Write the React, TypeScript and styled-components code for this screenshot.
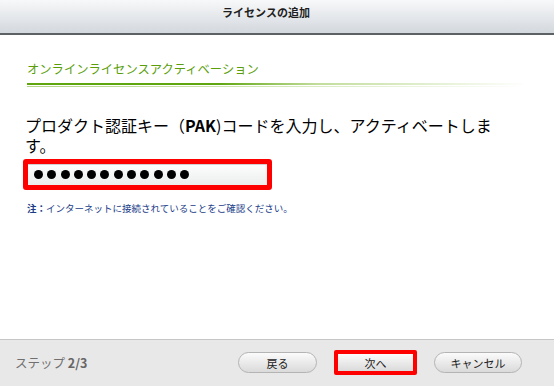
import styled, { createGlobalStyle } from 'styled-components';

const GlobalStyle = createGlobalStyle`
  html, body {
    margin: 0;
    padding: 0;
    width: 554px;
    height: 386px;
    overflow: hidden;
    background: #fff;
    font-family: "Noto Sans CJK JP", "DejaVu Sans", sans-serif;
  }
`;

const DOT_COUNT = 12;

export default function App() {
  return (
    <>
      <GlobalStyle />
      <S_Page>
        <S_Header>ライセンスの追加</S_Header>
        <S_Body>
          <S_SectionTitle>オンラインライセンスアクティベーション</S_SectionTitle>
          <S_Rule />
          <S_Lead>
            プロダクト認証キー（<b>PAK</b>)コードを入力し、アクティベートします。
          </S_Lead>
          <S_KeyField>
            {Array.from({ length: DOT_COUNT }).map((_, i) => (
              <S_Dot key={i} />
            ))}
          </S_KeyField>
          <S_Note>
            <b>注：</b>インターネットに接続されていることをご確認ください。
          </S_Note>
        </S_Body>
        <S_Footer>
          <S_Step>
            ステップ <b>2/3</b>
          </S_Step>
          <S_Actions>
            <S_Button $w={79}>戻る</S_Button>
            <S_Highlight>
              <S_Button $w={75} $square>
                次へ
              </S_Button>
            </S_Highlight>
            <S_Button $w={88}>キャンセル</S_Button>
          </S_Actions>
        </S_Footer>
      </S_Page>
    </>
  );
}

// ------------ スタイル設定 ------------
const S_Page = styled.div`
  display: flex;
  flex-direction: column;
  width: 554px;
  height: 386px;
`;

const S_Header = styled.div`
  height: 35px;
  box-sizing: border-box;
  padding: 4px 22px 0 0;
  text-align: center;
  font-size: 11px;
  line-height: 16px;
  font-weight: bold;
  color: #1e1e1e;
  background: linear-gradient(#f7f8f9, #d3d8de);
  border-bottom: 2px solid #5c6166;
`;

const S_Body = styled.div`
  flex: 1;
  display: flex;
  flex-direction: column;
  align-items: flex-start;
  padding: 26px 0 0 23px;
  background: #fff;
`;

const S_SectionTitle = styled.div`
  margin-left: 4px;
  font-size: 12.3px;
  line-height: 16px;
  color: #5a9e0a;
`;

const S_Rule = styled.div`
  margin: 6px 0 0 4px;
  width: 500px;
  height: 4px;
  background:
    linear-gradient(to right, #5fa60f 0%, #5fa60f 38%, #c2dd9c 58%, #ffffff 100%) top / 100% 2px no-repeat,
    linear-gradient(to right, #b3d586 0%, #d3e7b8 50%, #ffffff 100%) bottom / 100% 1px no-repeat;
`;

const S_Lead = styled.div`
  margin: 28px 0 0 2px;
  width: 475px;
  font-size: 16px;
  line-height: 20px;
  color: #000;
  b {
    font-weight: bold;
  }
`;

const S_KeyField = styled.div`
  display: flex;
  align-items: center;
  gap: 4.3px;
  margin-top: 4px;
  width: 249px;
  height: 31px;
  box-sizing: border-box;
  padding-left: 6px;
  border: 5px solid #ff0000;
  border-radius: 3px;
  background: linear-gradient(#fdfdfd, #eceeee);
  box-shadow: inset 0 1px 0 #d0d0d0;
`;

const S_Dot = styled.span`
  width: 9px;
  height: 9px;
  border-radius: 50%;
  background: #000;
  flex: none;
`;

const S_Note = styled.div`
  margin: 11px 0 0 4px;
  font-size: 9.5px;
  line-height: 14px;
  color: #1b3d88;
  b {
    font-weight: bold;
  }
`;

const S_Footer = styled.div`
  display: flex;
  align-items: center;
  justify-content: space-between;
  height: 47px;
  box-sizing: border-box;
  padding: 0 32px 1px 15px;
  background: #e8e8e8;
  border-top: 1px solid #c6c6c6;
`;

const S_Step = styled.div`
  font-size: 12.5px;
  color: #707070;
  b {
    font-weight: bold;
    color: #666;
  }
`;

const S_Actions = styled.div`
  display: flex;
  align-items: center;
  gap: 17px;
`;

const S_Highlight = styled.div`
  display: flex;
  border: 4px solid #ff0000;
  border-radius: 2px;
`;

const S_Button = styled.div<{ $w: number; $square?: boolean }>`
  display: flex;
  align-items: center;
  justify-content: center;
  width: ${(p) => p.$w}px;
  height: ${(p) => (p.$square ? 17 : 21)}px;
  box-sizing: border-box;
  font-size: 11px;
  color: #222;
  background: linear-gradient(#fbfbfb, #dadada);
  border: ${(p) => (p.$square ? 'none' : '1px solid #b4b4b4')};
  border-radius: ${(p) => (p.$square ? '0' : '11px')};
`;
